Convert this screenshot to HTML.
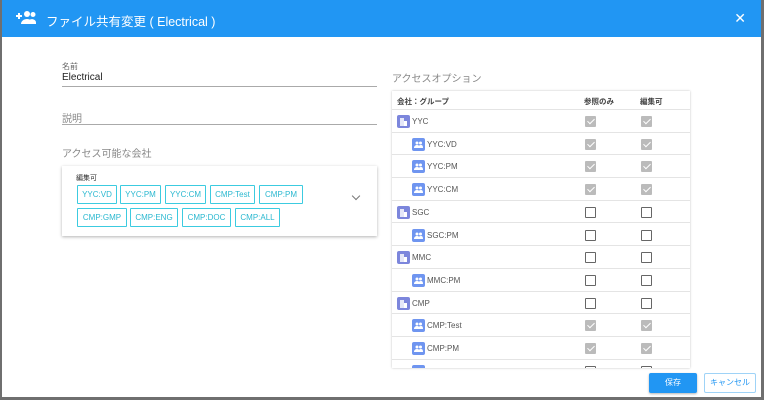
<!DOCTYPE html>
<html><head><meta charset="utf-8"><style>
*{box-sizing:border-box;margin:0;padding:0}
body{width:764px;height:400px;background:#6f6f6f;font-family:"Liberation Sans","Noto Sans CJK JP",sans-serif;position:relative;overflow:hidden}
.dlg{position:absolute;left:2px;top:0;width:759px;height:397px;background:#fff;overflow:hidden}
.hd{height:37px;background:#2196f3;color:#fff;position:relative}
.hd .t{position:absolute;left:44px;top:11px;font-size:12.5px}
.hd .x{position:absolute;right:15px;top:10px;font-size:14px}
.lbl{position:absolute;font-size:8px;color:#666}
.txt{position:absolute;font-size:10px;color:#222}
.line{position:absolute;height:1px;background:#aaa}
.gl{position:absolute;font-size:10px;color:#888}
.card{position:absolute;left:60px;top:166px;width:315px;height:70px;background:#fff;box-shadow:0 1px 3px rgba(0,0,0,.3)}
.chip{position:absolute;height:19px;border:1px solid #3ccbe0;color:#2ab8d0;font-size:8px;text-align:center;line-height:17px;border-radius:1px}
.tbl{position:absolute;left:390px;top:91px;width:298px;height:277px;box-shadow:0 0 2px rgba(0,0,0,.25);overflow:hidden}
.row{position:absolute;left:0;width:298px;border-bottom:1px solid #e4e4e4;font-size:8px;color:#555}
.ic{position:absolute;width:13px;height:13px;border-radius:2px}
.ic svg{position:absolute;left:2px;top:2px}
.cb{position:absolute;width:11px;height:11px;border:1.5px solid #666;border-radius:1px}
.cb.on{border:none;background:#bbb}
.cb.on:after{content:"";position:absolute;left:3.5px;top:1px;width:3px;height:6px;border:solid #fff;border-width:0 1.5px 1.5px 0;transform:rotate(45deg)}
.btn{position:absolute;top:373px;height:20px;font-size:8px;text-align:center;line-height:20px;border-radius:2px}
</style></head><body>
<div class="dlg">
<div class="hd">
<svg style="position:absolute;left:13px;top:10px" width="22" height="16" viewBox="0 0 22 16"><path d="M1 6h6M4 3v6" stroke="#fff" stroke-width="2"/><circle cx="12" cy="4" r="3" fill="#fff"/><circle cx="18" cy="4.5" r="2.5" fill="#fff"/><path d="M6 14c0-3 3-5 6-5s6 2 6 5zM15 9.5c2-1 6 0 6 3v1.5h-3" fill="#fff"/></svg>
<div class="t">ファイル共有変更 ( Electrical )</div><div class="x">✕</div></div>
<div class="lbl" style="left:60px;top:61px">名前</div>
<div class="txt" style="left:60px;top:72px">Electrical</div>
<div class="line" style="left:60px;top:86px;width:315px"></div>
<div class="gl" style="left:60px;top:110px">説明</div>
<div class="line" style="left:60px;top:124px;width:315px"></div>
<div class="gl" style="left:60px;top:145px">アクセス可能な会社</div>
<div class="card">
<div style="position:absolute;left:14px;top:7px;font-size:7px;color:#333">編集可</div>
<div class="chip" style="left:15px;top:19px;width:40px">YYC:VD</div>
<div class="chip" style="left:58px;top:19px;width:41px">YYC:PM</div>
<div class="chip" style="left:103px;top:19px;width:41px">YYC:CM</div>
<div class="chip" style="left:148px;top:19px;width:45px">CMP:Test</div>
<div class="chip" style="left:197px;top:19px;width:44px">CMP:PM</div>
<div class="chip" style="left:15px;top:42px;width:50px">CMP:GMP</div>
<div class="chip" style="left:68px;top:42px;width:48px">CMP:ENG</div>
<div class="chip" style="left:120px;top:42px;width:49px">CMP:DOC</div>
<div class="chip" style="left:173px;top:42px;width:45px">CMP:ALL</div>
<div style="position:absolute;left:291px;top:27px;width:6px;height:6px;border:solid #777;border-width:0 1px 1px 0;transform:rotate(45deg)"></div>
</div>
<div class="gl" style="left:390px;top:70px">アクセスオプション</div>
<div class="tbl">
<div class="row" style="top:0;height:19px;font-weight:bold;color:#444;font-size:7.5px"><span style="position:absolute;left:5px;top:5px">会社：グループ</span><span style="position:absolute;left:192px;top:5px">参照のみ</span><span style="position:absolute;left:248px;top:5px">編集可</span></div>
<div id="rows"></div>
</div>
<div class="btn" style="left:647px;width:48px;background:#2196f3;color:#fff;box-shadow:0 1px 2px rgba(0,0,0,.3)">保存</div>
<div class="btn" style="left:702px;width:52px;border:1px solid #9fd3f7;color:#2196f3;line-height:18px">キャンセル</div>
</div>
<script>
var d=[["YYC",0,1],["YYC:VD",1,1],["YYC:PM",1,1],["YYC:CM",1,1],["SGC",0,0],["SGC:PM",1,0],["MMC",0,0],["MMC:PM",1,0],["CMP",0,0],["CMP:Test",1,1],["CMP:PM",1,1],["CMP:IT",1,0]];
var bld='<svg width="9" height="9"><rect x="1" y="1" width="4" height="8" fill="#fff" opacity=".8"/><rect x="5" y="4" width="3" height="5" fill="#fff"/></svg>';
var grp='<svg width="9" height="9"><circle cx="3" cy="3" r="1.5" fill="#fff"/><circle cx="6.5" cy="3" r="1.5" fill="#fff"/><path d="M0 8c0-2 1.5-3 3-3s3 1 3 3zM4 8c0-2 1.5-3 3-3s2 1 2 3z" fill="#fff"/></svg>';
var h="";d.forEach(function(r,i){var t=19+i*22.7;var x=r[1]?20:5;var col=r[1]?"#6f95f0":"#7c86dc";
h+='<div class="row" style="top:'+t+'px;height:22.7px"><div class="ic" style="left:'+x+'px;top:5px;background:'+col+'">'+(r[1]?grp:bld)+'</div><span style="position:absolute;left:'+(x+15)+'px;top:7px">'+r[0]+'</span><div class="cb'+(r[2]?' on':'')+'" style="left:193px;top:6px"></div><div class="cb'+(r[2]?' on':'')+'" style="left:249px;top:6px"></div></div>';});
document.getElementById("rows").innerHTML=h;
</script>
</body></html>
